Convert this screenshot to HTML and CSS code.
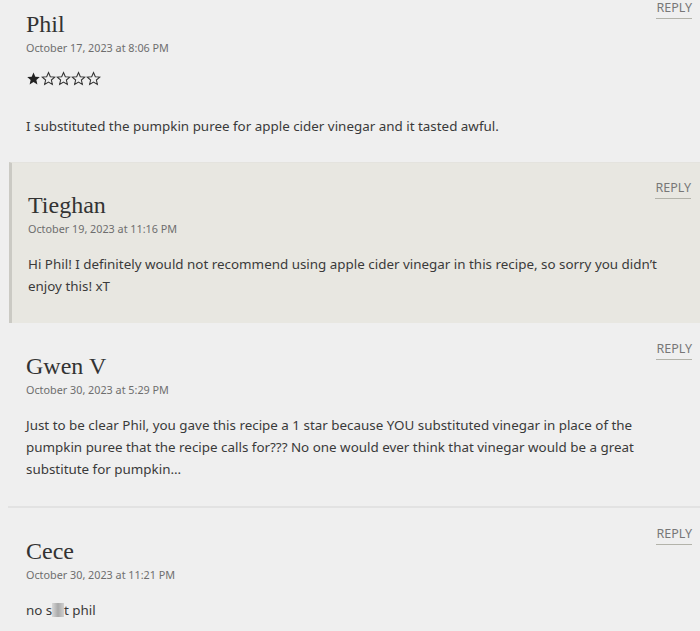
FILE: index.html
```html
<!DOCTYPE html>
<html lang="en">
<head>
<meta charset="utf-8">
<title>Comments</title>
<link rel="stylesheet" href="styles.css">
</head>
<body>
<ol class="comments">
  <li class="comment comment--first">
    <div class="comment-head">
      <div class="who">
        <div class="name">Phil</div>
        <div class="date">October 17, 2023 at 8:06 PM</div>
      </div>
      <a class="reply" href="#">Reply</a>
    </div>
    <div class="stars" aria-label="1 out of 5 stars">
      <svg viewBox="0 0 24 24" class="star"><path class="fill" d="M12 2.5l2.9 6.6 7.1.6-5.4 4.7 1.6 7-6.2-3.7-6.2 3.7 1.6-7L2 9.7l7.1-.6z"/></svg>
      <svg viewBox="0 0 24 24" class="star"><path class="line" d="M12 2.5l2.9 6.6 7.1.6-5.4 4.7 1.6 7-6.2-3.7-6.2 3.7 1.6-7L2 9.7l7.1-.6z"/></svg>
      <svg viewBox="0 0 24 24" class="star"><path class="line" d="M12 2.5l2.9 6.6 7.1.6-5.4 4.7 1.6 7-6.2-3.7-6.2 3.7 1.6-7L2 9.7l7.1-.6z"/></svg>
      <svg viewBox="0 0 24 24" class="star"><path class="line" d="M12 2.5l2.9 6.6 7.1.6-5.4 4.7 1.6 7-6.2-3.7-6.2 3.7 1.6-7L2 9.7l7.1-.6z"/></svg>
      <svg viewBox="0 0 24 24" class="star"><path class="line" d="M12 2.5l2.9 6.6 7.1.6-5.4 4.7 1.6 7-6.2-3.7-6.2 3.7 1.6-7L2 9.7l7.1-.6z"/></svg>
    </div>
    <p class="text text--rated">I substituted the pumpkin puree for apple cider vinegar and it tasted awful.</p>
  </li>
  <li class="comment comment--author">
    <div class="comment-head">
      <div class="who">
        <div class="name">Tieghan</div>
        <div class="date">October 19, 2023 at 11:16 PM</div>
      </div>
      <a class="reply" href="#">Reply</a>
    </div>
    <p class="text">Hi Phil! I definitely would not recommend using apple cider vinegar in this recipe, so sorry you didn’t enjoy this! xT</p>
  </li>
  <li class="comment comment--divided">
    <div class="comment-head">
      <div class="who">
        <div class="name">Gwen V</div>
        <div class="date">October 30, 2023 at 5:29 PM</div>
      </div>
      <a class="reply" href="#">Reply</a>
    </div>
    <p class="text">Just to be clear Phil, you gave this recipe a 1 star because YOU substituted vinegar in place of the pumpkin puree that the recipe calls for??? No one would ever think that vinegar would be a great substitute for pumpkin…</p>
  </li>
  <li class="comment">
    <div class="comment-head">
      <div class="who">
        <div class="name">Cece</div>
        <div class="date">October 30, 2023 at 11:21 PM</div>
      </div>
      <a class="reply" href="#">Reply</a>
    </div>
    <p class="text">no s<span class="censor">hi</span>t phil</p>
  </li>
</ol>
</body>
</html>
```
FILE: styles.css
```css
html, body {
  margin: 0;
  padding: 0;
  background: #efefef;
}
body {
  font-family: "Noto Sans", "Open Sans", sans-serif;
  color: #3a3a3a;
  overflow: hidden;
}
.comments {
  list-style: none;
  margin: 0;
  padding: 0;
}
.comment {
  padding: 19px 8px 27px 26px;
}
.comment--first {
  padding-top: 1px;
  padding-bottom: 25px;
}
.comment--first .name {
  margin-top: 10px;
}
.comment--author {
  margin-left: 9px;
  padding-left: 16px;
  padding-right: 9px;
  padding-bottom: 26px;
  background: #e8e7e1;
  border-left: 3px solid #cbcac4;
  border-top: 1px solid #e4e3de;
  padding-top: 18px;
}
.comment--divided {
  margin-left: 8px;
  padding-left: 18px;
  border-bottom: 2px solid #e2e2e2;
  padding-bottom: 26px;
}
.comment-head {
  display: flex;
  justify-content: space-between;
  align-items: flex-start;
}
.name {
  margin-top: 11px;
  font-family: "Liberation Serif", "Times New Roman", serif;
  font-size: 24px;
  line-height: 26px;
  color: #333;
}
.date {
  margin-top: 3px;
  font-size: 10.8px;
  line-height: 16px;
  color: #6e6e6e;
}
.reply {
  font-size: 12.5px;
  line-height: 14px;
  text-transform: uppercase;
  color: #777;
  text-decoration: none;
  padding-bottom: 3px;
  border-bottom: 1px solid #b3b3aa;
}
.stars {
  display: flex;
  margin-top: 13px;
  height: 18px;
  align-items: center;
}
.star {
  width: 15px;
  height: 15px;
}
.star .fill {
  fill: #222;
}
.star .line {
  fill: none;
  stroke: #333;
  stroke-width: 1.7;
}
.text {
  margin: 16px 0 0;
  padding-right: 30px;
  font-size: 13.4px;
  line-height: 22px;
}
.text--rated {
  margin-top: 28px;
}
.censor {
  display: inline-block;
  color: transparent;
  background: linear-gradient(90deg, #d8d8d8, #a9a9a9 50%, #d0d0d0);
  line-height: 14px;
}
```
